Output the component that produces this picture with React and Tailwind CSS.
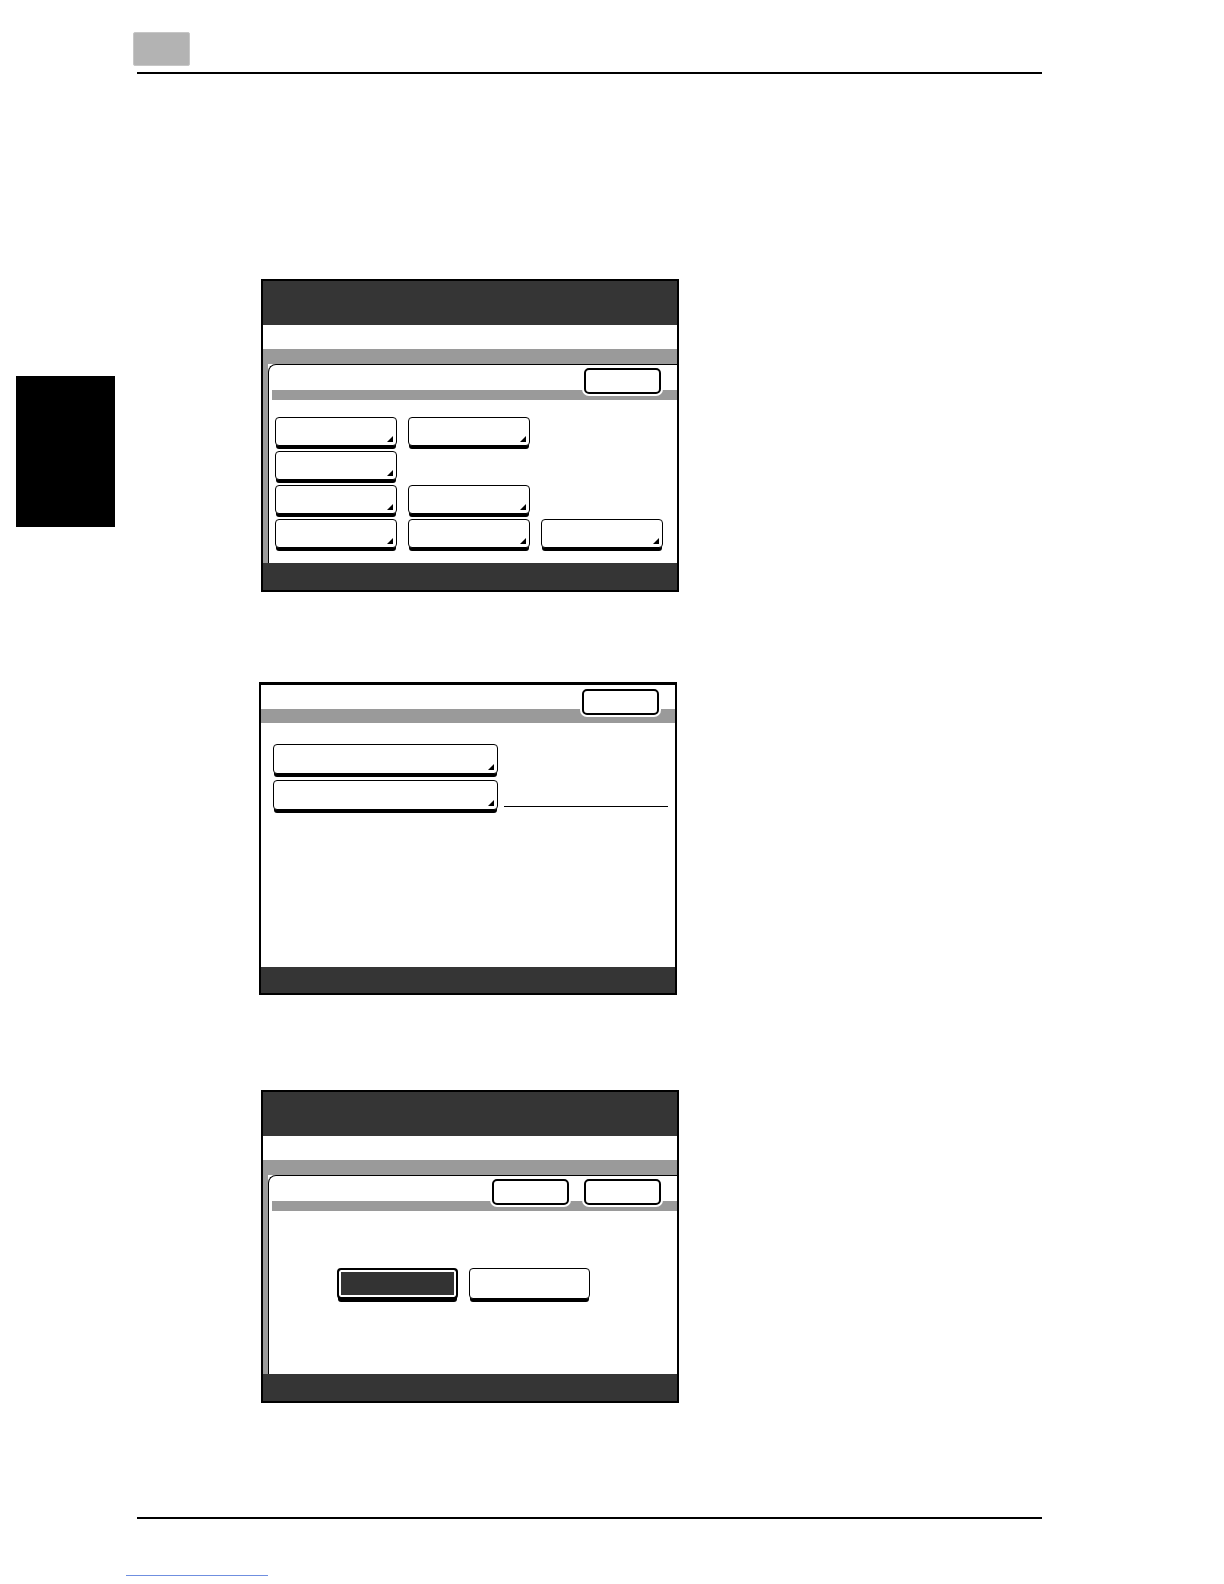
import React from "react";

// Touch-panel style button with the little corner triangle
function KeyButton({ w = "w-[122px]", h = "h-[29px]", arrow = true }) {
  return (
    <div
      className={`relative ${w} ${h} rounded-[4px] border-[1.5px] border-black bg-white shadow-[0_4px_0_-1px_#000]`}
    >
      {arrow && (
        <svg className="absolute bottom-[3px] right-[3px]" width="6" height="6" viewBox="0 0 6 6">
          <polygon points="6,0 6,6 0,6" fill="#000" />
        </svg>
      )}
    </div>
  );
}

function TopButton() {
  return (
    <div className="h-[26px] w-[77px] rounded-[5px] border-2 border-black bg-white ring-2 ring-white" />
  );
}

// Framed screen with dark title, white band, grey band and inner tab panel
function FramedScreen({ topButtons, children }) {
  return (
    <div className="flex h-[313px] w-[418px] flex-col border-2 border-black bg-white">
      <div className="h-[44px] bg-[#353535]" />
      <div className="h-[24px] bg-white" />
      <div className="h-[15px] bg-[#9a9a9a]" />
      <div className="flex flex-1">
        <div className="w-[5px] bg-[#9a9a9a]" />
        <div className="flex flex-1 flex-col rounded-tl-[8px] border-l-[1.5px] border-t-[1.5px] border-black bg-white">
          <div className="relative h-[35px]">
            <div className="absolute bottom-0 left-[3px] right-0 h-[10px] bg-[#9a9a9a]" />
            <div className="absolute right-[16px] top-[3px] flex gap-[15px]">
              {Array.from({ length: topButtons }).map((_, i) => (
                <TopButton key={i} />
              ))}
            </div>
          </div>
          {children}
        </div>
      </div>
      <div className="h-[27px] bg-[#353535]" />
    </div>
  );
}

export default function App() {
  return (
    <div className="flex h-[1584px] w-[1224px] flex-col bg-white font-['Liberation_Sans',sans-serif]">
      {/* page header */}
      <div className="pl-[133px] pt-[32px]">
        <div className="h-[34px] w-[57px] rounded-[2px] border border-[#c6c6c6] bg-[#b3b3b3]" />
      </div>
      <div className="ml-[137px] mt-[6px] h-[2px] w-[905px] bg-black" />

      {/* body */}
      <div className="flex items-start">
        <div className="ml-[16px] mt-[302px] h-[151px] w-[99px] bg-black" />
        <div className="ml-[146px] mt-[205px] flex flex-col">
          <FramedScreen topButtons={1}>
            <div className="grid grid-cols-[122px_122px_122px] gap-x-[11px] gap-y-[5px] pl-[6px] pt-[17px]">
              <KeyButton />
              <KeyButton />
              <div />
              <KeyButton />
              <div />
              <div />
              <KeyButton />
              <KeyButton />
              <div />
              <KeyButton />
              <KeyButton />
              <KeyButton />
            </div>
          </FramedScreen>

          {/* second screen */}
          <div className="-ml-[2px] mt-[90px] flex h-[313px] w-[418px] flex-col border-2 border-t-[3px] border-black bg-white">
            <div className="relative h-[38px]">
              <div className="absolute bottom-0 left-0 right-0 h-[14px] bg-[#9a9a9a]" />
              <div className="absolute right-[16px] top-[4px]">
                <TopButton />
              </div>
            </div>
            <div className="flex flex-1 flex-col gap-[6px] pl-[12px] pt-[21px]">
              <KeyButton w="w-[225px]" h="h-[30px]" />
              <div className="flex items-end">
                <KeyButton w="w-[225px]" h="h-[30px]" />
                <div className="mb-[3px] ml-[6px] h-px w-[164px] bg-black" />
              </div>
            </div>
            <div className="h-[26px] bg-[#353535]" />
          </div>

          {/* third screen */}
          <div className="mt-[95px]">
            <FramedScreen topButtons={2}>
              <div className="flex gap-[11px] pl-[68px] pt-[57px]">
                <div className="h-[31px] w-[121px] rounded-[4px] border-2 border-black bg-[#333] shadow-[inset_0_0_0_2px_#fff,0_4px_0_-1px_#000]" />
                <KeyButton w="w-[121px]" h="h-[31px]" arrow={false} />
              </div>
            </FramedScreen>
          </div>
        </div>
      </div>

      {/* page footer */}
      <div className="ml-[137px] mt-[114px] h-[2px] w-[905px] bg-black" />
      <div className="ml-[126px] mt-[56px] h-px w-[142px] bg-[#6f8fe0]" />
    </div>
  );
}
